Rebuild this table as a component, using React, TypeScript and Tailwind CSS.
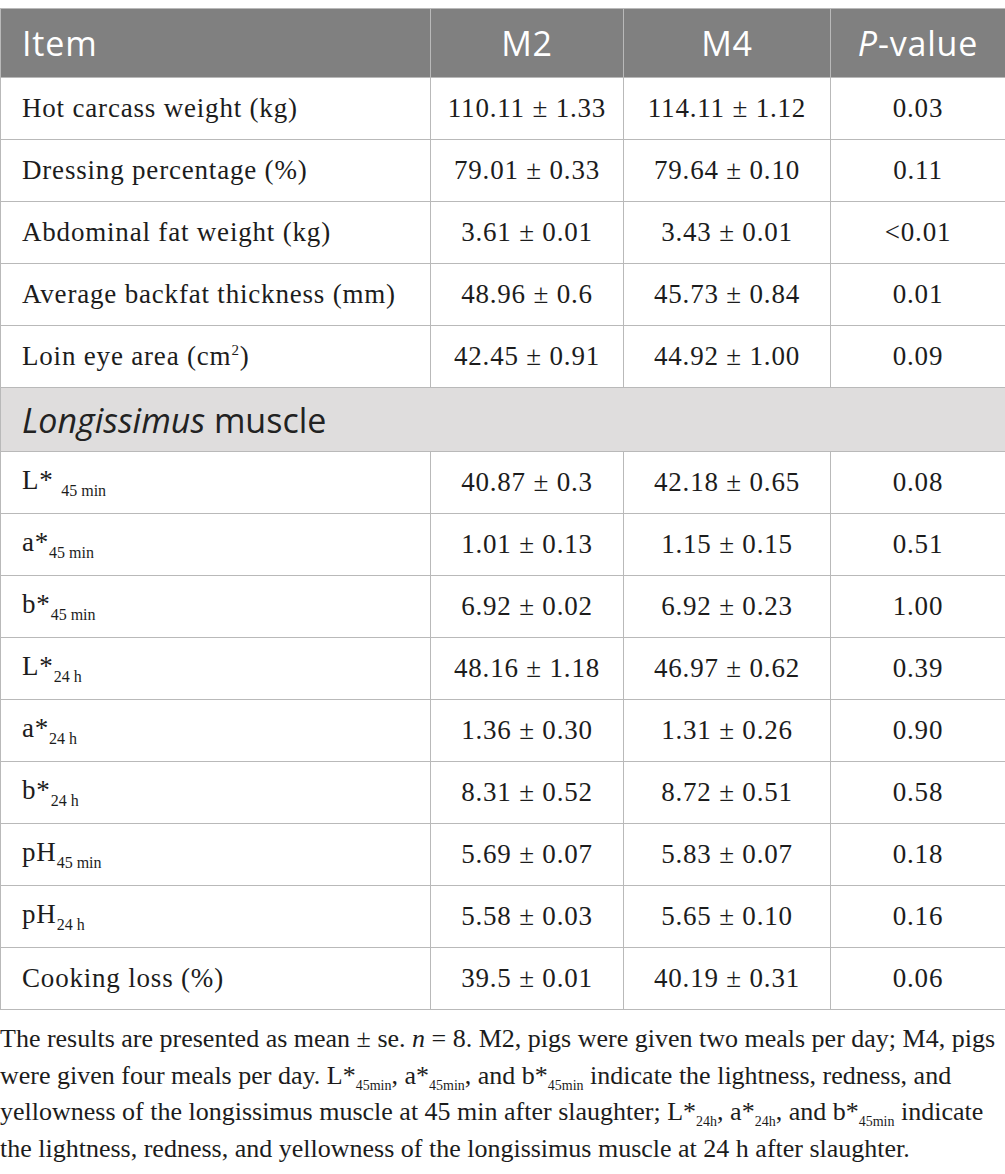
import type { ReactNode } from 'react'

type Row = { label: ReactNode; m2: string; m4: string; p: string }

function Sub({ children }: { children: ReactNode }) {
  return <span className="align-[-7px] text-[16px] leading-none tracking-normal">{children}</span>
}

function CapSub({ children }: { children: ReactNode }) {
  return <span className="align-[-6px] text-[14px] leading-none">{children}</span>
}

const TOP: Row[] = [
  { label: 'Hot carcass weight (kg)', m2: '110.11 ± 1.33', m4: '114.11 ± 1.12', p: '0.03' },
  { label: 'Dressing percentage (%)', m2: '79.01 ± 0.33', m4: '79.64 ± 0.10', p: '0.11' },
  { label: 'Abdominal fat weight (kg)', m2: '3.61 ± 0.01', m4: '3.43 ± 0.01', p: '<0.01' },
  { label: 'Average backfat thickness (mm)', m2: '48.96 ± 0.6', m4: '45.73 ± 0.84', p: '0.01' },
  {
    label: (
      <>
        Loin eye area (cm<span className="align-[10px] text-[15px] leading-none">2</span>)
      </>
    ),
    m2: '42.45 ± 0.91',
    m4: '44.92 ± 1.00',
    p: '0.09',
  },
]

const MUSCLE: Row[] = [
  { label: <>L* <Sub>45 min</Sub></>, m2: '40.87 ± 0.3', m4: '42.18 ± 0.65', p: '0.08' },
  { label: <>a*<Sub>45 min</Sub></>, m2: '1.01 ± 0.13', m4: '1.15 ± 0.15', p: '0.51' },
  { label: <>b*<Sub>45 min</Sub></>, m2: '6.92 ± 0.02', m4: '6.92 ± 0.23', p: '1.00' },
  { label: <>L*<Sub>24 h</Sub></>, m2: '48.16 ± 1.18', m4: '46.97 ± 0.62', p: '0.39' },
  { label: <>a*<Sub>24 h</Sub></>, m2: '1.36 ± 0.30', m4: '1.31 ± 0.26', p: '0.90' },
  { label: <>b*<Sub>24 h</Sub></>, m2: '8.31 ± 0.52', m4: '8.72 ± 0.51', p: '0.58' },
  { label: <>pH<Sub>45 min</Sub></>, m2: '5.69 ± 0.07', m4: '5.83 ± 0.07', p: '0.18' },
  { label: <>pH<Sub>24 h</Sub></>, m2: '5.58 ± 0.03', m4: '5.65 ± 0.10', p: '0.16' },
  { label: 'Cooking loss (%)', m2: '39.5 ± 0.01', m4: '40.19 ± 0.31', p: '0.06' },
]

function DataRow({ row }: { row: Row }) {
  return (
    <tr className="h-[62px]">
      <td className="border border-[#b9b9b9] pl-[21px] whitespace-nowrap">{row.label}</td>
      <td className="border border-[#b9b9b9] text-center">{row.m2}</td>
      <td className="border border-[#b9b9b9] text-center">{row.m4}</td>
      <td className="border border-[#b9b9b9] text-center">{row.p}</td>
    </tr>
  )
}

export default function App() {
  return (
    <div className="w-[1005px] bg-white pt-[8px] font-['Liberation_Serif',serif] text-[#1c1c1c]">
      <table className="w-[1005px] table-fixed border-collapse text-[27px] leading-none tracking-[0.03em]">
        <colgroup>
          <col className="w-[430px]" />
          <col className="w-[193px]" />
          <col className="w-[207px]" />
          <col className="w-[175px]" />
        </colgroup>
        <thead>
          <tr className="h-[69px] bg-[#808080] font-['Open_Sans',sans-serif] text-[34px] text-white">
            <th className="border border-[#b9b9b9] pl-[21px] text-left font-normal">Item</th>
            <th className="border border-[#b9b9b9] text-center font-normal">M2</th>
            <th className="border border-[#b9b9b9] text-center font-normal">M4</th>
            <th className="border border-[#b9b9b9] text-center font-normal">
              <i>P</i>-value
            </th>
          </tr>
        </thead>
        <tbody>
          {TOP.map((r, i) => (
            <DataRow key={`t${i}`} row={r} />
          ))}
          <tr className="h-[64px] bg-[#dfdddd]">
            <td
              colSpan={4}
              className="border border-[#b9b9b9] pl-[21px] font-['Open_Sans',sans-serif] text-[34px] tracking-normal text-[#222]"
            >
              <i>Longissimus</i> muscle
            </td>
          </tr>
          {MUSCLE.map((r, i) => (
            <DataRow key={`m${i}`} row={r} />
          ))}
        </tbody>
      </table>
      <p className="mt-[11px] whitespace-nowrap text-[26px] leading-[36.5px]">
        The results are presented as mean ± se. <i>n</i> = 8. M2, pigs were given two meals per day; M4, pigs
        <br />
        were given four meals per day. L*<CapSub>45min</CapSub>, a*<CapSub>45min</CapSub>, and b*<CapSub>45min</CapSub> indicate the lightness, redness, and
        <br />
        yellowness of the longissimus muscle at 45 min after slaughter; L*<CapSub>24h</CapSub>, a*<CapSub>24h</CapSub>, and b*<CapSub>45min</CapSub> indicate
        <br />
        the lightness, redness, and yellowness of the longissimus muscle at 24 h after slaughter.
      </p>
    </div>
  )
}
